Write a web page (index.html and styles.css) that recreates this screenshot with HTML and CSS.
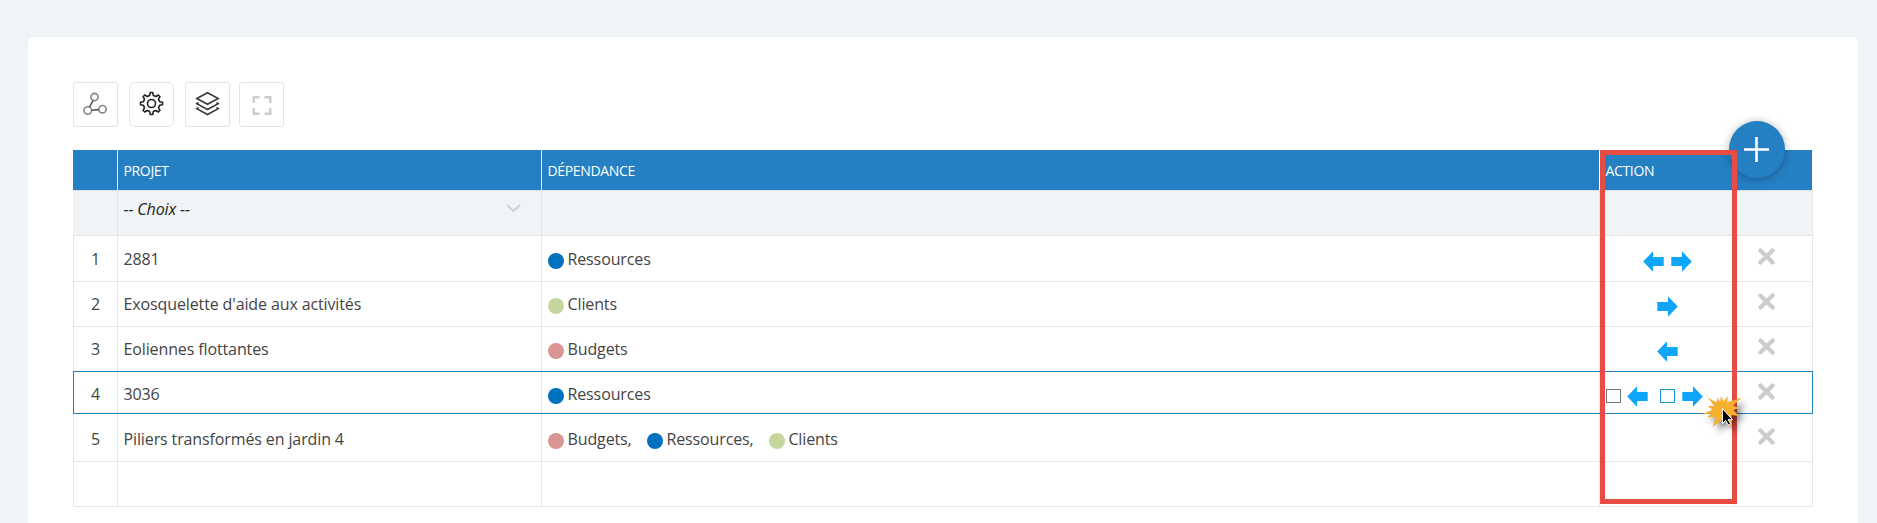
FILE: index.html
```
<!DOCTYPE html>
<html lang="fr">
<head>
<meta charset="utf-8">
<title>Dépendances</title>
<link rel="stylesheet" href="styles.css">
</head>
<body>
<svg class="defs" width="0" height="0">
  <symbol id="arrow" viewBox="0 0 21 21"><path d="M0.3 6H11V0.3L20.8 10.5L11 20.7V15H0.3Z"/></symbol>
  <symbol id="cross" viewBox="0 0 17 17"><path d="M2.4 2.4L14.6 14.6M14.6 2.4L2.4 14.6"/></symbol>
</svg>
<main class="card">
  <nav class="toolbar">
    <button class="tool" aria-label="Graphe"><svg width="25" height="25" viewBox="0 0 25 25" fill="none" stroke="#858585" stroke-width="1.6"><circle cx="11.500" cy="6" r="3.6"/><circle cx="4.800" cy="19.500" r="3.8"/><circle cx="19.500" cy="18.200" r="3.7"/><path d="M10 9.300L6.500 16M8.700 19.200L15.700 18.600" stroke="#555"/></svg></button>
    <button class="tool round" aria-label="Paramètres"><svg width="25" height="25" viewBox="0 0 25 25" fill="none" stroke="#222" stroke-width="1.6" stroke-linejoin="round"><circle cx="12.5" cy="12.5" r="4"/><path d="M10.7 4.4L11.300 1.500H13.700L14.300 4.400L16.900 5.500L19.300 4L21 5.700L19.500 8.100L20.600 10.700L23.500 11.300V13.700L20.600 14.300L19.500 16.900L21 19.300L19.300 21L16.900 19.500L14.300 20.600L13.700 23.500H11.300L10.700 20.600L8.100 19.500L5.700 21L4 19.300L5.500 16.900L4.400 14.300L1.500 13.700V11.300L4.400 10.700L5.500 8.100L4 5.700L5.700 4L8.100 5.500Z"/></svg></button>
    <button class="tool" aria-label="Calques"><svg width="25" height="25" viewBox="0 0 25 25" fill="none" stroke="#3a3a3a" stroke-width="1.6"><path d="M12.5 1.700L23.200 7.500L12.500 13.300L1.800 7.500Z"/><path d="M3.500 11.500L1.800 12.700L12.500 18.500L23.200 12.700L21.500 11.500"/><path d="M3.500 16.300L1.800 17.700L12.500 23.500L23.200 17.700L21.500 16.300"/></svg></button>
    <button class="tool last" aria-label="Plein écran"><svg width="25" height="25" viewBox="0 0 25 25" fill="none" stroke="#c9cdd1" stroke-width="2.4"><path d="M4.700 11V5.200H10.500M15.500 5.200H21.300V11M21.300 16V21.800H15.500M10.500 21.800H4.700V16"/></svg></button>
  </nav>
  <section class="grid">
    <div class="row head"><div></div><div>PROJET</div><div>DÉPENDANCE</div><div>ACTION</div><div></div></div>
    <div class="row filter"><div></div><div class="select"><span>-- Choix --</span><svg width="15" height="9" viewBox="0 0 15 9" fill="none" stroke="#cfd3d6" stroke-width="2.2"><path d="M1 1L7.5 7L14 1"/></svg></div><div></div><div></div><div></div></div>
    <div class="row first"><div class="num">1</div><div>2881</div><div><i class="dot blue"></i><span>Ressources</span></div><div class="act pair"><svg class="arrow left"><use href="#arrow"/></svg><svg class="arrow"><use href="#arrow"/></svg></div><div class="del"><svg class="cross"><use href="#cross"/></svg></div></div>
    <div class="row"><div class="num">2</div><div>Exosquelette d'aide aux activités</div><div><i class="dot green"></i><span>Clients</span></div><div class="act"><svg class="arrow"><use href="#arrow"/></svg></div><div class="del"><svg class="cross"><use href="#cross"/></svg></div></div>
    <div class="row"><div class="num">3</div><div>Eoliennes flottantes</div><div><i class="dot pink"></i><span>Budgets</span></div><div class="act"><svg class="arrow left"><use href="#arrow"/></svg></div><div class="del"><svg class="cross"><use href="#cross"/></svg></div></div>
    <div class="row selected"><div class="num">4</div><div>3036</div><div><i class="dot blue"></i><span>Ressources</span></div><div class="act checks"><i class="box"></i><svg class="arrow left"><use href="#arrow"/></svg><i class="box active"></i><svg class="arrow"><use href="#arrow"/></svg></div><div class="del"><svg class="cross"><use href="#cross"/></svg></div></div>
    <div class="row"><div class="num">5</div><div>Piliers transformés en jardin 4</div><div class="tags"><i class="dot pink"></i><span>Budgets,</span><i class="dot blue"></i><span>Ressources,</span><i class="dot green"></i><span>Clients</span></div><div></div><div class="del"><svg class="cross"><use href="#cross"/></svg></div></div>
    <div class="row"><div></div><div></div><div></div><div></div><div></div></div>
    <button class="fab" aria-label="Ajouter"><svg width="25" height="25" viewBox="0 0 25 25" stroke="#fff" stroke-width="2.6"><path d="M12.5 0V25M0 12.5H25"/></svg></button>
    <div class="highlight"></div>
    <svg class="click" width="50" height="42" viewBox="0 0 50 42"><path class="burst" d="M7.500 5.500L16.500 10.500L17.500 5.500L20 10L21 4L23.500 9.500L28 4L27 10.500L42 5.500L33 13.500L39 16L33.500 18L39 24L31 23L32 36L24 26.500L12.500 35L16 25.500L7 25L12 21.500L1.500 22.500L12.500 17.800L7.500 14L14.500 14Z"/><path class="pointer" d="M22.400 16.500V31.500L25.700 28.600L28.200 33L30.500 31.600L28.200 27.700H32.500Z"/></svg>
  </section>
</main>
</body>
</html>
```
FILE: styles.css
```
* { box-sizing: border-box; }
body {
  margin: 0;
  height: 523px;
  overflow: hidden;
  padding: 37px 19px 0 28px;
  background: #f0f4f7;
  font: 16px/22px "Open Sans", sans-serif;
  letter-spacing: -0.12px;
  color: #444;
}
.defs { position: absolute; }
.card {
  height: 500px;
  padding: 45px 45px 0;
  background: #fff;
  border-radius: 5px;
}
.toolbar { display: flex; gap: 11px; height: 45px; }
.tool {
  display: flex;
  align-items: center;
  justify-content: center;
  width: 45px;
  height: 45px;
  padding: 0 0 2px;
  background: #fff;
  border: 1px solid #dfe6e6;
  border-radius: 3px;
}
.tool.round { border-radius: 6px; }
.tool.last { margin-left: -2px; padding: 0; }
.grid { position: relative; width: 1740px; margin-top: 23px; }
.row {
  position: relative;
  display: grid;
  grid-template-columns: 45px 424px 1058px 135px 78px;
  height: 45px;
}
.row > div {
  display: flex;
  align-items: flex-start;
  padding: 11px 6px 0 5.5px;
  border-right: 1px solid #e6e6e6;
  border-bottom: 1px solid #e6e6e6;
}
.row > div:first-child { border-left: 1px solid #e6e6e6; }
.row.head { height: 40px; font-size: 14px; letter-spacing: -0.35px; color: #fff; }
.row.head > div {
  padding-top: 10px;
  background: #257fc3;
  border-bottom: 0;
  border-color: #fff;
}
.row.head > div:first-child { border-left: 0; }
.row.filter { height: 46px; color: #222; font-style: italic; }
.row.filter > div {
  padding-top: 7px;
  background: #f0f4f7;
  border-top: 1px solid #dcdfe2;
}
.row.filter > div:first-child { border-left-color: #f0f4f7; }
.select { justify-content: space-between; }
.row .select svg { margin: 6px 14px 0 0; }
.row.first { height: 46px; }
.row.first > div { padding-top: 12px; }
.row > .num { justify-content: center; padding-left: 5px; }
.row > .num { padding-right: 5px; }
.dot {
  width: 16px;
  height: 16px;
  margin: 5px 3.5px 0 0.5px;
  border-radius: 50%;
}
.blue { background: #0070c0; }
.green { background: #c4d69b; }
.pink { background: #d99594; }
.tags span { margin-right: 14.8px; }
.row > .act { justify-content: center; padding: 14px 0 0 1px; }
.row.first > .act { gap: 7px; padding: 15px 0 0; }
.arrow { width: 21px; height: 21px; fill: #0ea5fb; }
.arrow.left { transform: scaleX(-1); }
.row > .checks { justify-content: flex-start; padding-left: 6px; }
.box {
  width: 15px;
  height: 14px;
  margin: 3px 6px 0 0;
  border: 1px solid #767676;
}
.box.active { margin: 3px 7px 0 12px; border-color: #1e96de; }
.row > .del { justify-content: flex-start; padding: 11px 0 0 23px; }
.row.first > .del { padding-top: 12px; }
.cross { width: 17px; height: 17px; fill: none; stroke: #ccc; stroke-width: 4.2; stroke-linecap: round; }
.selected::after {
  content: "";
  position: absolute;
  inset: -1px 0 3px;
  border: 1px solid #257fc3;
}
.row.selected > div { border-bottom-color: #fff; }
.fab {
  position: absolute;
  left: 1656px;
  top: -29px;
  display: grid;
  place-items: center;
  width: 56px;
  height: 57px;
  padding: 0 1px 0 0;
  background: #257fc3;
  border: 0;
  border-radius: 50%;
  box-shadow: 0 1px 8px rgba(0, 0, 0, .3);
}
.highlight {
  position: absolute;
  left: 1527px;
  top: 0;
  width: 137px;
  height: 354px;
  border: 5px solid #e94b45;
}
.click { position: absolute; left: 1627px; top: 242px; overflow: visible; }
.burst { fill: #f5b02e; filter: drop-shadow(5px 5px 3px rgba(0, 0, 0, .5)); }
.pointer { fill: #000; stroke: #fff; stroke-width: 1; }
```
